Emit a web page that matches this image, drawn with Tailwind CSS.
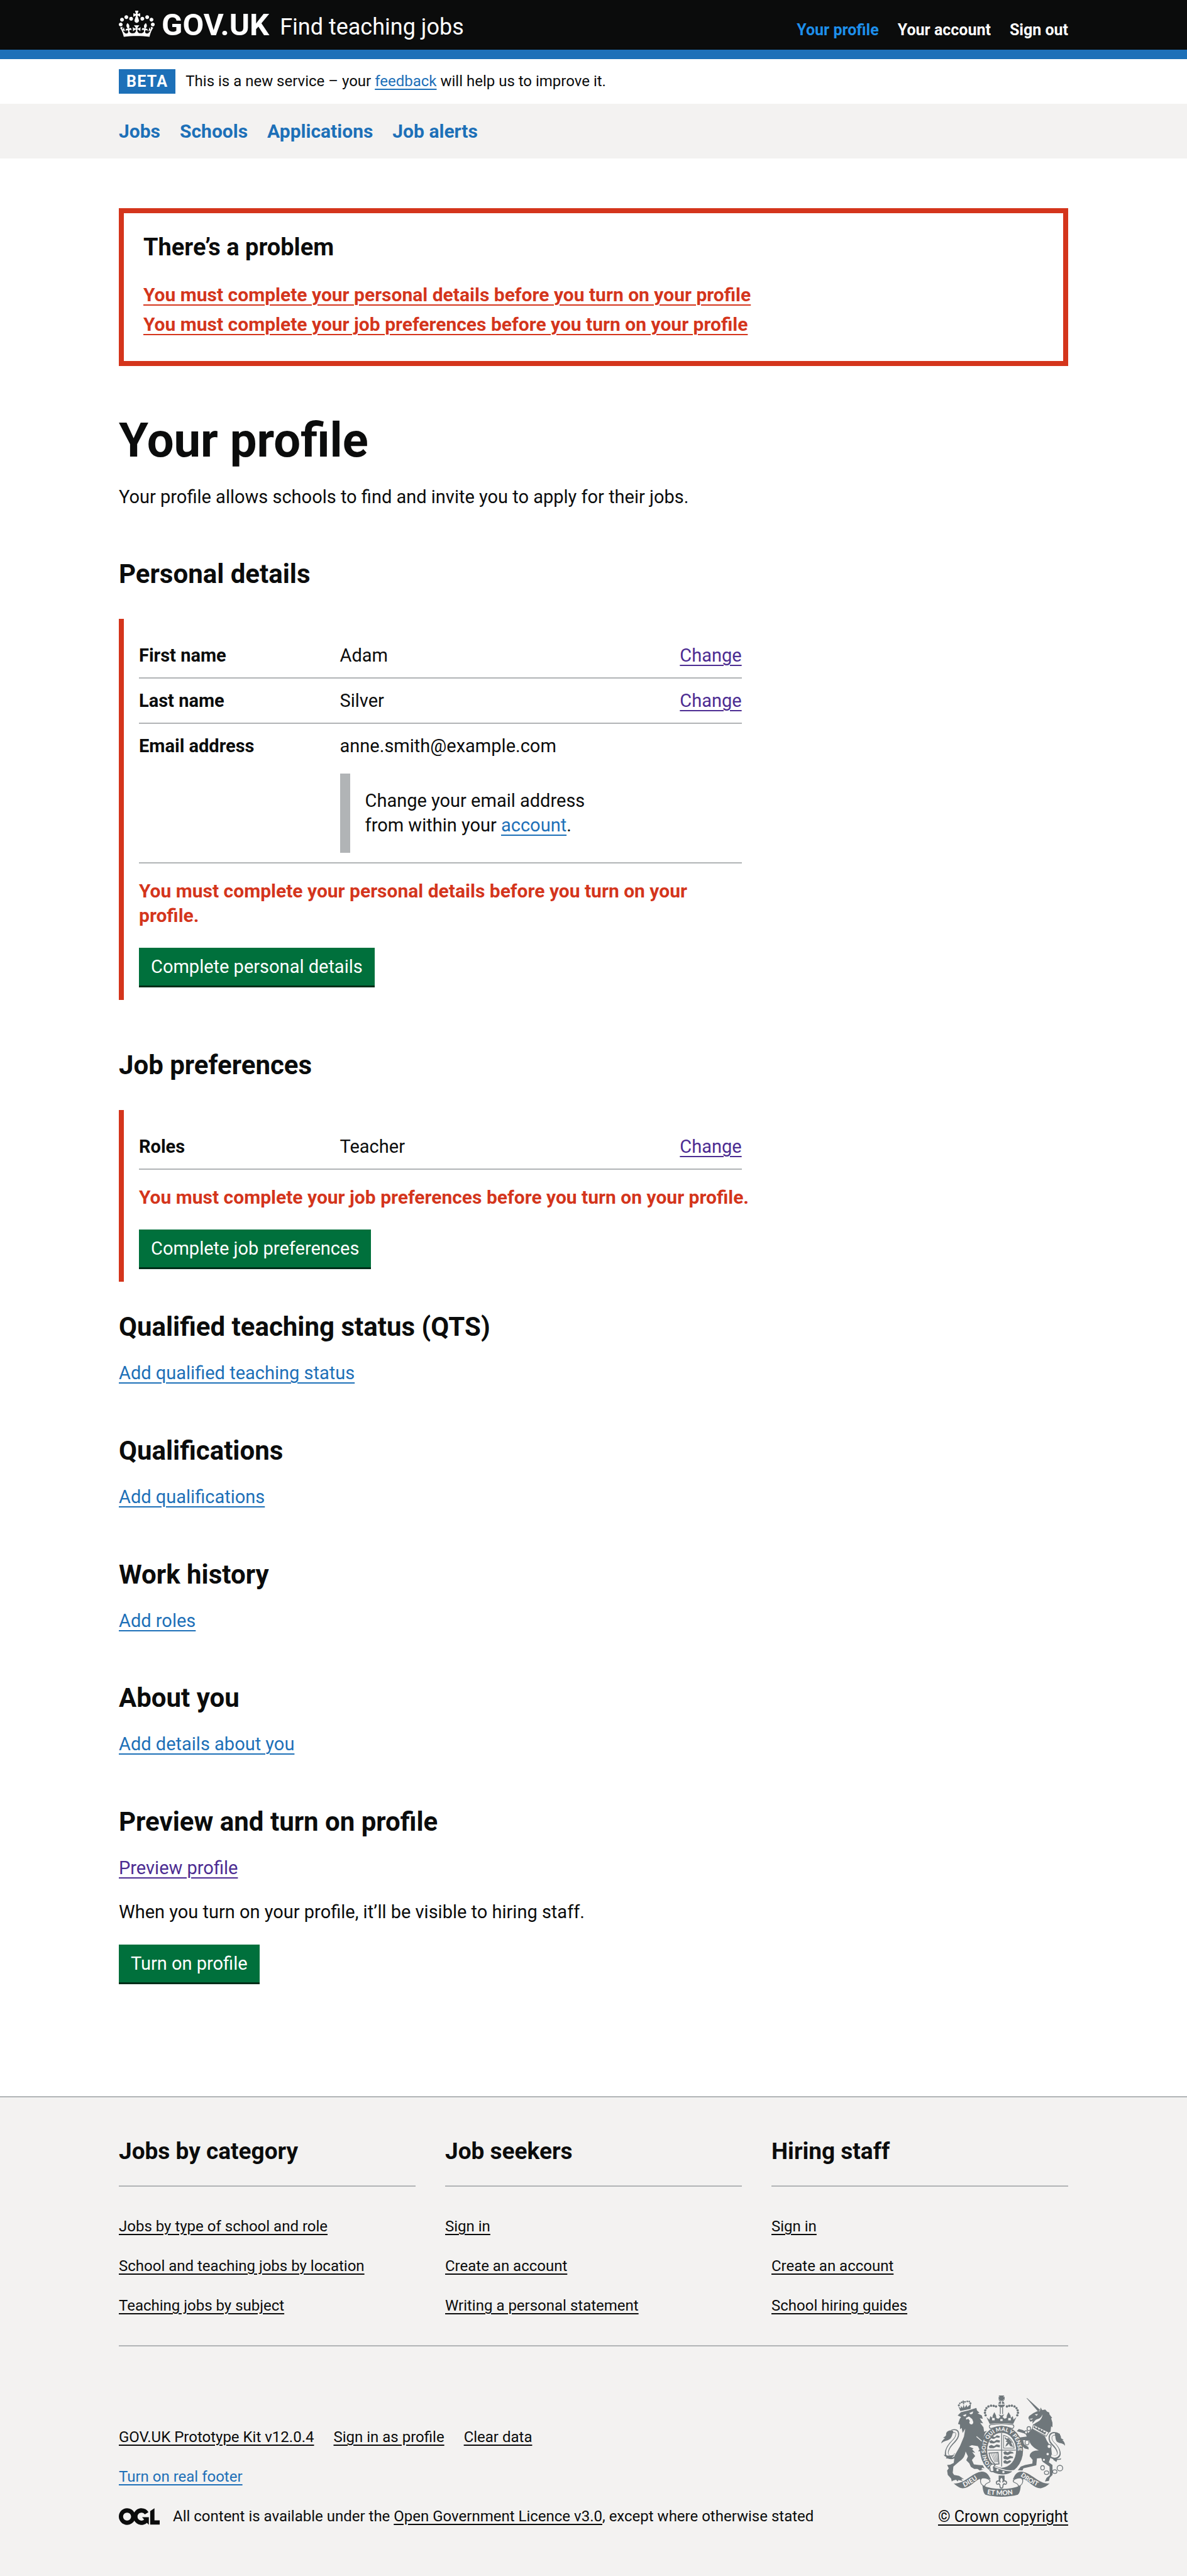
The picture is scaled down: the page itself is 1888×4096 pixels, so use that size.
<!DOCTYPE html>
<html lang="en">
<head>
<meta charset="utf-8">
<meta name="viewport" content="width=device-width, initial-scale=1">
<title>Your profile - Find teaching jobs - GOV.UK</title>
<script src="https://cdn.jsdelivr.net/npm/@tailwindcss/browser@4"></script>
</head>
<body class="bg-[#f3f2f1] text-[#0b0c0c] text-[29px] leading-[39px] font-[Roboto,Arial,sans-serif]">

<header class="bg-[#0b0c0c] text-white border-b-[15px] border-[#1d70b8]">
  <div class="mx-auto max-w-[1510px] h-[79px] pt-[17px] flex items-start justify-between">
    <div class="flex items-start">
      <a href="#" class="flex items-start gap-[11px] font-bold text-[49px] leading-[45px]">
        <svg class="w-[57px] h-[42px]" viewBox="0 0 132 97" fill="currentColor" aria-hidden="true"><path fill-rule="evenodd" d="M25 30.2c3.5 1.5 7.7-.2 9.1-3.7 1.5-3.6-.2-7.8-3.9-9.2-3.6-1.4-7.6.3-9.1 3.9-1.4 3.5.3 7.5 3.9 9zM9 39.5c3.6 1.5 7.8-.2 9.2-3.7 1.5-3.6-.2-7.8-3.9-9.1-3.6-1.5-7.6.2-9.1 3.8-1.4 3.5.3 7.5 3.8 9zM4.4 57.2c3.5 1.5 7.7-.2 9.1-3.8 1.5-3.6-.2-7.7-3.9-9.1-3.5-1.5-7.6.3-9.1 3.8-1.4 3.5.3 7.6 3.9 9.1zm38.3-21.4c3.5 1.5 7.7-.2 9.1-3.8 1.5-3.6-.2-7.7-3.9-9.1-3.6-1.5-7.6.3-9.1 3.8-1.3 3.6.4 7.7 3.9 9.1zm64.4-5.6c-3.6 1.5-7.8-.2-9.1-3.7-1.5-3.6.2-7.8 3.8-9.2 3.6-1.4 7.7.3 9.2 3.9 1.3 3.5-.4 7.5-3.9 9zm15.9 9.3c-3.6 1.5-7.7-.2-9.1-3.7-1.5-3.6.2-7.8 3.7-9.1 3.6-1.5 7.7.2 9.2 3.8 1.5 3.5-.3 7.5-3.8 9zm4.7 17.7c-3.6 1.5-7.8-.2-9.2-3.8-1.5-3.6.2-7.7 3.9-9.1 3.6-1.5 7.7.3 9.2 3.8 1.3 3.5-.4 7.6-3.9 9.1zM89.3 35.8c-3.6 1.5-7.8-.2-9.2-3.8-1.4-3.6.2-7.7 3.9-9.1 3.6-1.5 7.7.3 9.2 3.8 1.4 3.6-.3 7.7-3.9 9.1zM69.7 17.7l8.9 4.7V9.3l-8.9 2.8c-.2-.3-.5-.6-.9-.9L72.4 0H59.6l3.5 11.2c-.3.3-.6.5-.9.9l-8.8-2.8v13.1l8.8-4.7c.3.3.6.7.9.9l-5 15.4v.1c-.2.8-.4 1.6-.4 2.4 0 4.1 3.1 7.5 7 8.1h.2c.3 0 .7.1 1 .1.4 0 .7 0 1-.1h.2c4-.6 7.1-4.1 7.1-8.1 0-.8-.1-1.7-.4-2.4V34l-5.1-15.4c.4-.2.7-.6 1-.9zM66 92.8c16.9 0 32.8 1.1 47.1 3.2 4-16.9 8.9-26.7 14-33.5l-9.6-3.4c1 4.9 1.1 7.2 0 10.2-1.5-1.4-3-4.3-4.2-8.7L108.6 76c2.8-2 5-3.2 7.5-3.3-4.4 9.4-10 11.9-13.6 11.2-4.3-.8-6.3-4.6-5.6-7.9 1-4.7 5.7-5.9 8-.5 4.3-8.7-3-11.4-7.6-8.8 7.1-7.2 7.9-13.5 2.1-21.1-8 6.1-8.1 12.3-4.5 20.8-4.7-5.4-12.1-2.5-9.5 6.2 3.4-5.2 7.9-2 7.2 3.1-.6 4.3-6.4 7.8-13.5 7.2-10.3-.9-10.9-8-11.2-13.8 2.5-.5 7.1 1.8 11 7.3L80.2 60c-4.1 4.4-8 5.3-12.3 5.4 1.4-4.4 8-11.6 8-11.6H55.5s6.4 7.2 7.9 11.6c-4.2-.1-8-1-12.3-5.4l1.4 16.4c3.9-5.5 8.5-7.7 10.9-7.3-.3 5.8-.9 12.8-11.1 13.8-7.2.6-12.9-2.9-13.5-7.2-.7-5 3.8-8.3 7.1-3.1 2.7-8.7-4.6-11.6-9.4-6.2 3.7-8.5 3.6-14.7-4.6-20.8-5.8 7.6-5 13.9 2.2 21.1-4.7-2.6-11.9.1-7.7 8.8 2.3-5.5 7.1-4.2 8.1.5.7 3.3-1.3 7.1-5.7 7.9-3.5.7-9-1.8-13.5-11.2 2.5.1 4.7 1.3 7.5 3.3l-4.7-15.4c-1.2 4.4-2.7 7.2-4.3 8.7-1.1-3-.9-5.3 0-10.2l-9.5 3.4c5 6.9 9.9 16.7 14 33.5 14.8-2.1 30.8-3.2 47.7-3.2z"/></svg>
        <span>GOV.UK</span>
      </a>
      <a href="#" class="ml-[17px] pt-[3px] text-[36px] leading-[47px]">Find teaching jobs</a>
    </div>
    <nav aria-label="Account" class="flex gap-[30px] pt-[15px] font-bold text-[25px] leading-[31px]">
      <a href="#" class="text-[#1d8feb]">Your profile</a>
      <a href="#">Your account</a>
      <a href="#">Sign out</a>
    </nav>
  </div>
</header>

<div class="bg-white">
  <div class="mx-auto max-w-[1510px] py-4 flex items-center gap-4 text-[24px] leading-[31px]">
    <strong class="bg-[#1d70b8] text-white px-3 py-1 font-bold text-[25px] tracking-wider">BETA</strong>
    <p>This is a new service – your <a href="#" class="text-[#1d70b8] underline decoration-2 underline-offset-4">feedback</a> will help us to improve it.</p>
  </div>
</div>

<nav aria-label="Main" class="bg-[#f3f2f1]">
  <div class="mx-auto max-w-[1510px] py-6 flex gap-[31px] font-bold text-[30px] leading-[39px] text-[#1d70b8]">
    <a href="#">Jobs</a>
    <a href="#">Schools</a>
    <a href="#">Applications</a>
    <a href="#">Job alerts</a>
  </div>
</nav>

<main class="bg-white pt-[79px] pb-[178px]">
  <div class="mx-auto max-w-[1510px]">

    <div role="alert" class="border-8 border-[#d4351c] p-[31px] pb-[39px]">
      <h2 class="font-bold text-[38px] leading-[47px]">There’s a problem</h2>
      <ul class="mt-8 flex flex-col gap-2 font-bold text-[30px] leading-[39px] text-[#d4351c]">
        <li><a href="#personal" class="underline decoration-2 underline-offset-[5px]">You must complete your personal details before you turn on your profile</a></li>
        <li><a href="#preferences" class="underline decoration-2 underline-offset-[5px]">You must complete your job preferences before you turn on your profile</a></li>
      </ul>
    </div>

    <div class="w-2/3 pr-4">
      <h1 class="mt-[79px] font-bold text-[76px] leading-[79px]">Your profile</h1>
      <p class="mt-[31px]">Your profile allows schools to find and invite you to apply for their jobs.</p>

      <h2 id="personal" class="mt-[79px] font-bold text-[42px] leading-[47px]">Personal details</h2>
      <section aria-labelledby="personal" class="mt-12 border-l-8 border-[#d4351c] pl-6 pt-[23px] pb-5">
        <dl>
          <div class="grid grid-cols-12 pt-4 pb-[15px] border-b-2 border-[#b1b4b6]">
            <dt class="col-span-4 font-bold">First name</dt>
            <dd class="col-span-5">Adam</dd>
            <dd class="col-span-3 text-right"><a href="#" class="text-[#4c2c92] underline decoration-2 underline-offset-[5px]">Change</a></dd>
          </div>
          <div class="grid grid-cols-12 pt-4 pb-[15px] border-b-2 border-[#b1b4b6]">
            <dt class="col-span-4 font-bold">Last name</dt>
            <dd class="col-span-5">Silver</dd>
            <dd class="col-span-3 text-right"><a href="#" class="text-[#4c2c92] underline decoration-2 underline-offset-[5px]">Change</a></dd>
          </div>
          <div class="grid grid-cols-12 pt-4 pb-[15px] border-b-2 border-[#b1b4b6]">
            <dt class="col-span-4 font-bold">Email address</dt>
            <dd class="col-span-5">
              <p>anne.smith@example.com</p>
              <p class="mt-6 border-l-16 border-[#b1b4b6] py-6 pl-6">Change your email address from within your <a href="#" class="text-[#1d70b8] underline decoration-2 underline-offset-[5px]">account</a>.</p>
            </dd>
          </div>
        </dl>
        <p class="mt-6 font-bold text-[30px] leading-[39px] text-[#d4351c]">You must complete your personal details before you turn on your profile.</p>
        <button type="button" class="mt-8 bg-[#00703c] text-white px-[19px] pt-[11px] pb-[10px] border-b-[3px] border-[#002d18]">Complete personal details</button>
      </section>

      <h2 id="preferences" class="mt-20 font-bold text-[42px] leading-[47px]">Job preferences</h2>
      <section aria-labelledby="preferences" class="mt-12 border-l-8 border-[#d4351c] pl-6 pt-[23px] pb-5">
        <dl>
          <div class="grid grid-cols-12 pt-4 pb-[15px] border-b-2 border-[#b1b4b6]">
            <dt class="col-span-4 font-bold">Roles</dt>
            <dd class="col-span-5">Teacher</dd>
            <dd class="col-span-3 text-right"><a href="#" class="text-[#4c2c92] underline decoration-2 underline-offset-[5px]">Change</a></dd>
          </div>
        </dl>
        <p class="mt-6 font-bold text-[30px] leading-[39px] whitespace-nowrap text-[#d4351c]">You must complete your job preferences before you turn on your profile.</p>
        <button type="button" class="mt-8 bg-[#00703c] text-white px-[19px] pt-[11px] pb-[10px] border-b-[3px] border-[#002d18]">Complete job preferences</button>
      </section>

      <h2 class="mt-12 font-bold text-[42px] leading-[47px]">Qualified teaching status (QTS)</h2>
      <p class="mt-[31px]"><a href="#" class="text-[#1d70b8] underline decoration-2 underline-offset-[5px]">Add qualified teaching status</a></p>

      <h2 class="mt-20 font-bold text-[42px] leading-[47px]">Qualifications</h2>
      <p class="mt-[31px]"><a href="#" class="text-[#1d70b8] underline decoration-2 underline-offset-[5px]">Add qualifications</a></p>

      <h2 class="mt-20 font-bold text-[42px] leading-[47px]">Work history</h2>
      <p class="mt-[31px]"><a href="#" class="text-[#1d70b8] underline decoration-2 underline-offset-[5px]">Add roles</a></p>

      <h2 class="mt-[79px] font-bold text-[42px] leading-[47px]">About you</h2>
      <p class="mt-[31px]"><a href="#" class="text-[#1d70b8] underline decoration-2 underline-offset-[5px]">Add details about you</a></p>

      <h2 class="mt-20 font-bold text-[42px] leading-[47px]">Preview and turn on profile</h2>
      <p class="mt-[31px]"><a href="#" class="text-[#4c2c92] underline decoration-2 underline-offset-[5px]">Preview profile</a></p>
      <p class="mt-[31px]">When you turn on your profile, it’ll be visible to hiring staff.</p>
      <button type="button" class="mt-8 bg-[#00703c] text-white px-[19px] pt-[11px] pb-[10px] border-b-[3px] border-[#002d18]">Turn on profile</button>
    </div>
  </div>
</main>

<footer class="border-t-2 border-[#b1b4b6] pt-[62px] pb-[79px] text-[24px] leading-[31px]">
  <div class="mx-auto max-w-[1510px]">
    <div class="grid grid-cols-3 gap-[47px] pb-[47px] border-b-2 border-[#b1b4b6]">
      <section>
        <h2 class="pb-[31px] border-b-2 border-[#b1b4b6] font-bold text-[37px] leading-[47px]">Jobs by category</h2>
        <ul class="mt-12 flex flex-col gap-8">
          <li><a href="#" class="underline decoration-2 underline-offset-4">Jobs by type of school and role</a></li>
          <li><a href="#" class="underline decoration-2 underline-offset-4">School and teaching jobs by location</a></li>
          <li><a href="#" class="underline decoration-2 underline-offset-4">Teaching jobs by subject</a></li>
        </ul>
      </section>
      <section>
        <h2 class="pb-[31px] border-b-2 border-[#b1b4b6] font-bold text-[37px] leading-[47px]">Job seekers</h2>
        <ul class="mt-12 flex flex-col gap-8">
          <li><a href="#" class="underline decoration-2 underline-offset-4">Sign in</a></li>
          <li><a href="#" class="underline decoration-2 underline-offset-4">Create an account</a></li>
          <li><a href="#" class="underline decoration-2 underline-offset-4">Writing a personal statement</a></li>
        </ul>
      </section>
      <section>
        <h2 class="pb-[31px] border-b-2 border-[#b1b4b6] font-bold text-[37px] leading-[47px]">Hiring staff</h2>
        <ul class="mt-12 flex flex-col gap-8">
          <li><a href="#" class="underline decoration-2 underline-offset-4">Sign in</a></li>
          <li><a href="#" class="underline decoration-2 underline-offset-4">Create an account</a></li>
          <li><a href="#" class="underline decoration-2 underline-offset-4">School hiring guides</a></li>
        </ul>
      </section>
    </div>

    <div class="mt-[78px] flex items-end justify-between">
      <div class="flex flex-col gap-8">
        <ul class="flex gap-[31px]">
          <li><a href="#" class="underline decoration-2 underline-offset-4">GOV.UK Prototype Kit v12.0.4</a></li>
          <li><a href="#" class="underline decoration-2 underline-offset-4">Sign in as profile</a></li>
          <li><a href="#" class="underline decoration-2 underline-offset-4">Clear data</a></li>
        </ul>
        <p><a href="#" class="text-[#1d70b8] underline decoration-2 underline-offset-4">Turn on real footer</a></p>
        <div class="flex items-center gap-[21px]">
          <!-- Open Government Licence logo -->
          <svg class="w-[65px] h-[27px]" viewBox="0 0 483.2 195.7" fill="currentColor" role="img" aria-label="Open Government Licence"><path d="M421.5 142.8V.1l-50.7 32.3v161.1h112.4v-50.7zm-122.3-9.6A47.12 47.12 0 0 1 221 97.8c0-26 21.1-47.1 47.1-47.1 16.7 0 31.4 8.7 39.7 21.8l42.7-27.2A97.63 97.63 0 0 0 268.1 0c-36.5 0-68.3 20.1-85.1 49.7A98 98 0 0 0 97.8 0C43.9 0 0 43.9 0 97.8s43.9 97.8 97.8 97.8c36.5 0 68.3-20.1 85.1-49.7a97.76 97.76 0 0 0 149.6 25.4l19.4 22.2h3v-87.8h-80l24.3 27.5zM97.8 145c-26 0-47.1-21.1-47.1-47.1s21.1-47.1 47.1-47.1 47.1 21.1 47.1 47.1S123.8 145 97.8 145"/></svg>
          <p>All content is available under the <a href="#" class="underline decoration-2 underline-offset-4">Open Government Licence v3.0</a>, except where otherwise stated</p>
        </div>
      </div>

      <a href="#" class="flex flex-col items-center gap-4">
        <!-- Royal coat of arms -->
        <svg class="w-[197px] h-[161px]" viewBox="132 126 750 612" fill="#6f777b" stroke="none" aria-hidden="true" font-family="Lato, sans-serif" font-weight="900">
          <!-- lion's tail -->
          <path d="M196 344C240 326 238 372 208 402C168 440 152 482 178 496C198 506 214 494 222 480" fill="none" stroke="#6f777b" stroke-width="22"/>
          <path d="M192 345C240 328 236 372 206 402C168 440 154 480 180 494C198 502 212 492 230 470" fill="none" stroke="#f3f2f1" stroke-width="12"/>
          <path d="M206 342C190 330 160 340 162 362C162 374 148 376 144 382C150 384 154 383 156 383C144 392 134 402 132 416C150 396 172 402 188 386C200 374 200 356 206 342ZM148 482C160 490 180 492 214 484L190 508L160 506L166 498C156 496 150 490 148 482Z"/>
          <!-- lion -->
          <path d="M232 246L252 226L296 216L345 201L349 216L364 230L352 233L378 246L384 266L366 264L386 294L368 291L388 318L392 344L410 340L398 352L386 386L402 410L410 440L402 484L394 474L386 484L380 474L366 476L372 464L356 462L364 452L354 432L318 426L300 434L328 446L320 452L338 472L320 468L338 492L318 516L330 542L360 546L384 548L394 566L380 562L376 572L388 574L366 580L352 570L332 570L312 558L302 536L284 518L294 494L280 464C276 494 262 512 240 526L206 556L202 594L210 606L240 612L270 632L254 630L262 642L236 638L232 646L222 636L204 640L196 646L192 628L172 606L168 580L178 566L168 546L186 544L208 534L214 488L246 432L270 374L278 326L262 352L256 322L246 330L246 302L234 298L244 268L252 256Z"/>
          <path d="M263 245L284 238L282 250L272 252ZM302 232L326 222L322 236L310 240ZM282 262L300 252L320 268L326 284C328 296 318 302 312 300C302 298 300 286 306 280L296 266L284 272Z" fill="#f3f2f1"/>
          <path d="M346 374L404 424" stroke="#f3f2f1" stroke-width="5"/>
          <!-- lion's crown -->
          <path d="M248 220L236 190L250 204L252 188L262 202L268 180L274 200L286 182L290 196L312 176L310 206Z"/>
          <g>
            <circle cx="239" cy="185" r="6"/><circle cx="245" cy="173" r="5"/><circle cx="256" cy="167" r="5"/><circle cx="277" cy="164" r="5"/><circle cx="290" cy="161" r="5"/><circle cx="302" cy="162" r="5"/><circle cx="309" cy="172" r="6"/>
            <path d="M262 156L268 155L269 162L276 163L270 168L272 178L264 178L264 168L257 164L263 162Z"/>
          </g>
          <!-- unicorn's tail -->
          <path d="M846 368C800 336 776 380 806 414C846 450 862 496 820 500C804 500 790 488 784 474" fill="none" stroke="#6f777b" stroke-width="22"/>
          <path d="M848 370C802 338 778 380 808 412C846 448 858 490 822 496C804 496 794 486 778 468" fill="none" stroke="#f3f2f1" stroke-width="12"/>
          <path d="M820 354C840 350 858 360 858 384L874 394L866 396C876 402 882 414 882 430C866 408 844 420 830 402C822 386 824 370 820 354ZM858 504C848 512 826 510 806 500L812 516L830 528L834 516L856 514Z"/>
          <!-- unicorn -->
          <path d="M648 141L654 143L732 214L718 222Z"/>
          <path d="M734 198L744 214L762 210L774 224L786 228L788 240L804 262L798 264L806 290L806 318L798 312L794 344L780 350L690 302L706 290C722 284 742 272 746 240C730 276 712 262 700 278L684 296L686 280L672 284L664 270L660 262L664 250L690 232L712 222L730 220Z"/>
          <path d="M698 240L718 238L710 248ZM664 268L688 264L680 272Z" fill="#f3f2f1"/>
          <path d="M682 326L700 338L760 372L772 400L798 440L802 480L784 530L806 546L806 606L790 622L784 642L760 646L770 624L790 608L788 556L746 526L738 504L712 506L708 548L660 560L630 566L624 580L596 578L614 556L640 546L684 538L686 516L668 494C668 470 690 458 724 458C700 448 672 428 664 396L628 396L634 420L660 438L662 452L638 446L624 432L606 380L650 374L644 358L606 346L590 342L602 328L624 334L650 346L660 352Z"/>
          <path d="M684 328L690 302L784 348L768 372Z" fill="#f3f2f1" stroke="#6f777b" stroke-width="4"/>
          <path d="M690 320L698 308L706 324L716 316L722 332L734 326L738 340L750 334L752 348L768 344L762 362Z"/>
          <!-- chain -->
          <g fill="#f3f2f1" stroke="#6f777b" stroke-width="5">
            <ellipse cx="663" cy="326" rx="11" ry="12"/><ellipse cx="646" cy="348" rx="8" ry="10"/><ellipse cx="652" cy="410" rx="12" ry="15"/>
            <circle cx="786" cy="434" r="12"/><circle cx="777" cy="480" r="10"/><circle cx="754" cy="515" r="9"/>
            <ellipse cx="746" cy="563" rx="11" ry="13"/><ellipse cx="770" cy="593" rx="13" ry="11"/><ellipse cx="820" cy="586" rx="13" ry="11"/><circle cx="851" cy="565" r="17"/>
          </g>
          <!-- royal crown -->
          <path d="M480 126H514L507 136L516 132V152L507 148L514 158H480L487 148L480 152V132L487 136ZM478 176C480 164 488 160 497 160C506 160 514 164 516 176ZM476 181H518C516 192 508 198 497 198C486 198 478 192 476 181Z"/>
          <path d="M494 160H500V182H494Z" fill="#f3f2f1"/>
          <path d="M490 198V238M504 198V238" stroke="#6f777b" stroke-width="5"/>
          <g>
            <circle cx="464" cy="192" r="7"/><circle cx="450" cy="188" r="7"/><circle cx="434" cy="187" r="7"/><circle cx="418" cy="192" r="7"/><circle cx="406" cy="202" r="7"/><circle cx="399" cy="215" r="7"/><circle cx="397" cy="230" r="7"/><circle cx="401" cy="245" r="7"/>
            <circle cx="530" cy="192" r="7"/><circle cx="544" cy="188" r="7"/><circle cx="560" cy="187" r="7"/><circle cx="576" cy="192" r="7"/><circle cx="588" cy="202" r="7"/><circle cx="595" cy="215" r="7"/><circle cx="597" cy="230" r="7"/><circle cx="593" cy="245" r="7"/>
          </g>
          <path d="M406 256L424 272L430 250L442 262L444 246L454 226L464 246L466 262L478 266L490 256L480 240L497 246L514 240L504 256L516 266L528 262L530 246L540 226L552 246L554 262L566 250L570 272L588 256L568 298C530 292 466 292 426 298Z"/>
          <path d="M432 302C476 294 518 294 564 302C576 306 574 320 564 326C520 308 476 308 432 326C420 320 420 306 432 302Z" fill="#f3f2f1" stroke="#6f777b" stroke-width="5"/>
          <path d="M440 262H456V276H440ZM538 262H554V276H538ZM490 268H504V280H490Z" fill="#f3f2f1"/>
          <!-- garter -->
          <ellipse cx="498" cy="457" rx="130" ry="148"/>
          <ellipse cx="498" cy="457" rx="88" ry="106" fill="#f3f2f1"/>
          <path id="garter" d="M446 558A98 118 0 1 1 554 556" fill="none"/>
          <text font-size="33" fill="#f3f2f1"><textPath href="#garter" startOffset="2">HONI SOIT QUI MAL Y PENSE</textPath></text>
          <!-- shield -->
          <path d="M498 352V556M412 456H584" stroke="#6f777b" stroke-width="5"/>
          <path d="M510 366V444H574C572 410 550 376 510 366Z" fill="none" stroke="#6f777b" stroke-width="4"/>
          <path d="M430 378L442 370L456 378L470 366L488 372L484 382L466 380L452 388L438 386ZM422 404L436 396L452 404L468 394L488 398L486 410L466 408L450 416L430 414ZM420 432L436 424L452 432L468 422L488 426L486 440L466 436L450 444L424 444ZM518 376L528 386L540 384L552 398L562 410L556 412L564 428L570 438L550 432L542 418L532 428L520 436L526 420L534 408L522 404L530 396L518 388ZM508 470L520 462L534 470L548 462L566 468L572 476L552 478L536 486L514 482ZM508 498L520 490L534 498L548 490L566 496L568 504L550 506L534 514L512 510ZM508 524L520 516L532 524L546 518L558 522L548 532L532 540L512 536Z"/>
          <path d="M422 474L476 470L482 540L458 542C440 526 426 506 422 474Z" fill="none" stroke="#6f777b" stroke-width="6"/>
          <path d="M434 476L458 530M445 476L464 528M456 475L470 528M467 474L475 530" stroke="#6f777b" stroke-width="3"/>
          <!-- buckle -->
          <path d="M432 544C470 566 530 588 572 580C556 598 530 608 500 606C470 604 440 594 424 580Z" stroke="#f3f2f1" stroke-width="6"/>
          <path d="M426 560C424 544 446 534 458 546L448 560L452 582C440 592 424 584 428 572Z" fill="#f3f2f1" stroke="#6f777b" stroke-width="6"/>
          <circle cx="473" cy="577" r="7" fill="#f3f2f1"/><circle cx="509" cy="589" r="7" fill="#f3f2f1"/>
          <!-- fleur-de-lis -->
          <path d="M480 610H516V650H480Z"/>
          <path d="M497 618C512 632 508 642 504 652C508 636 530 642 528 656C526 666 518 664 516 660C508 660 506 668 506 674C506 690 488 690 488 674C488 668 486 660 478 660C476 664 468 666 466 656C464 642 486 636 490 652C486 642 482 632 497 618Z" fill="#f3f2f1" stroke="#6f777b" stroke-width="6"/>
          <!-- motto ribbon -->
          <path d="M208 658C270 664 320 592 376 586C404 584 420 604 432 634C404 620 376 632 372 650L366 630C330 646 300 690 260 687C240 684 222 672 208 658ZM788 658C726 664 676 592 620 586C592 584 578 604 566 634C592 620 620 632 624 650L630 630C666 646 696 690 736 687C756 684 774 672 788 658Z"/>
          <path d="M384 624C410 624 428 634 428 644C428 656 396 652 396 676C380 670 370 656 370 644C370 634 376 626 384 624ZM612 624C586 624 568 634 568 644C568 656 600 652 600 676C616 670 626 656 626 644C626 634 620 626 612 624Z" fill="#f3f2f1" stroke="#6f777b" stroke-width="5"/>
          <path d="M382 670C450 698 546 698 614 670C612 700 606 718 596 726C540 742 456 742 400 726C390 718 384 700 382 670Z"/>
          <path id="dieu" d="M272 680Q320 658 374 616" fill="none"/>
          <path id="mon" d="M410 722Q498 736 590 720" fill="none"/>
          <path id="droit" d="M612 612Q660 652 732 684" fill="none"/>
          <g font-size="40" fill="#f3f2f1">
            <text><textPath href="#dieu">DIEU</textPath></text>
            <text><textPath href="#mon">ET MON</textPath></text>
            <text font-size="38"><textPath href="#droit">DROIT</textPath></text>
          </g>
        </svg>
        <span class="text-[25px] underline decoration-2 underline-offset-4">© Crown copyright</span>
      </a>
    </div>
  </div>
</footer>

</body>
</html>
